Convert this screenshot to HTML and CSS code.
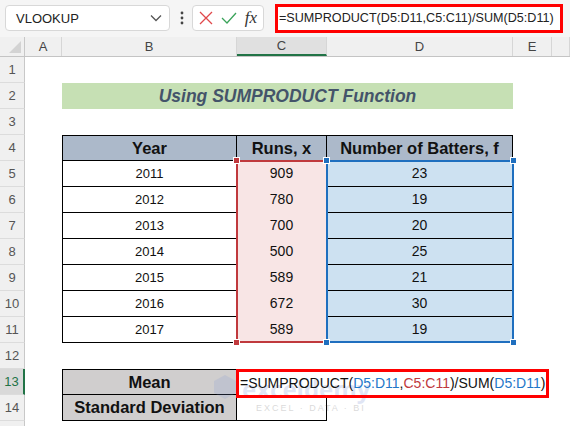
FILE: index.html
```html
<!DOCTYPE html>
<html lang="en">
<head>
  <meta charset="UTF-8">
  <title>SUMPRODUCT mean</title>
  <link rel="stylesheet" href="styles.css">
</head>
<body>

  <div class="topbar">
    <div class="namebox">
      <span>VLOOKUP</span>
      <svg width="12" height="8" viewBox="0 0 12 8"><path d="M1 1.5 L6 6.5 L11 1.5" fill="none" stroke="#555" stroke-width="1.3"/></svg>
    </div>
    <svg class="dots" width="4" height="14" viewBox="0 0 4 14"><circle cx="2" cy="2" r="1.4" fill="#444"/><circle cx="2" cy="7" r="1.4" fill="#444"/><circle cx="2" cy="12" r="1.4" fill="#444"/></svg>
    <div class="fxbox">
      <svg width="14" height="14" viewBox="0 0 14 14"><path d="M1 1 L13 13 M13 1 L1 13" stroke="#e0484b" stroke-width="1.3"/></svg>
      <svg width="16" height="12" viewBox="0 0 16 12"><path d="M1 6 L6 11 L15 1" fill="none" stroke="#3aa35a" stroke-width="1.3"/></svg>
      <span class="fx">fx</span>
    </div>
    <div class="formula">=SUMPRODUCT(D5:D11,C5:C11)/SUM(D5:D11)</div>
  </div>

  <div class="sheet">
    <div class="row colheads">
      <div class="rh corner"><span class="tri"></span></div>
      <div class="ch ca">A</div>
      <div class="ch cb">B</div>
      <div class="ch cc active">C</div>
      <div class="ch cd">D</div>
      <div class="ch ce">E</div>
      <div class="ch cf"></div>
    </div>

    <div class="row"><div class="rh">1</div></div>
    <div class="row">
      <div class="rh">2</div>
      <div class="ca"></div>
      <div class="title">Using SUMPRODUCT Function</div>
    </div>
    <div class="row"><div class="rh">3</div></div>
    <div class="row">
      <div class="rh">4</div>
      <div class="ca"></div>
      <div class="cell cb head first">Year</div>
      <div class="cell cc head">Runs, x</div>
      <div class="cell cd head">Number of Batters, f</div>
    </div>
    <div class="row">
      <div class="rh">5</div>
      <div class="ca"></div>
      <div class="cell cb year">2011</div>
      <div class="cell cc runs">909</div>
      <div class="cell cd bats">23</div>
    </div>
    <div class="row">
      <div class="rh">6</div>
      <div class="ca"></div>
      <div class="cell cb year">2012</div>
      <div class="cell cc runs">780</div>
      <div class="cell cd bats">19</div>
    </div>
    <div class="row">
      <div class="rh">7</div>
      <div class="ca"></div>
      <div class="cell cb year">2013</div>
      <div class="cell cc runs">700</div>
      <div class="cell cd bats">20</div>
    </div>
    <div class="row">
      <div class="rh">8</div>
      <div class="ca"></div>
      <div class="cell cb year">2014</div>
      <div class="cell cc runs">500</div>
      <div class="cell cd bats">25</div>
    </div>
    <div class="row">
      <div class="rh">9</div>
      <div class="ca"></div>
      <div class="cell cb year">2015</div>
      <div class="cell cc runs">589</div>
      <div class="cell cd bats">21</div>
    </div>
    <div class="row">
      <div class="rh">10</div>
      <div class="ca"></div>
      <div class="cell cb year">2016</div>
      <div class="cell cc runs">672</div>
      <div class="cell cd bats">30</div>
    </div>
    <div class="row">
      <div class="rh">11</div>
      <div class="ca"></div>
      <div class="cell cb year">2017</div>
      <div class="cell cc runs">589</div>
      <div class="cell cd bats">19</div>
    </div>
    <div class="row"><div class="rh">12</div></div>
    <div class="row">
      <div class="rh current">13</div>
      <div class="ca"></div>
      <div class="cell cb label first">Mean</div>
      <div class="cell cc activecell"></div>
    </div>
    <div class="row">
      <div class="rh">14</div>
      <div class="ca"></div>
      <div class="cell cb label">Standard Deviation</div>
      <div class="cell cc plain"></div>
    </div>
    <div class="row"><div class="rh"></div></div>

    <!-- range highlights while editing the formula -->
    <div class="sel sel-red">
      <span class="handle tl"></span><span class="handle bl"></span>
    </div>
    <div class="sel sel-blue">
      <span class="handle tl"></span><span class="handle tr"></span>
      <span class="handle bl"></span><span class="handle br"></span>
    </div>

    <div class="watermark">
      <svg width="26" height="26" viewBox="0 0 26 26"><path d="M13 1 L24 7 L24 19 L13 25 L2 19 L2 7 Z" fill="#7d93d6"/></svg>
      <span class="wm-name">exceldemy</span>
      <span class="wm-sub">EXCEL · DATA · BI</span>
    </div>

    <div class="editor">=SUMPRODUCT(<span class="ref-d">D5:D11</span>,<span class="ref-c">C5:C11</span>)/SUM(<span class="ref-d">D5:D11</span>)</div>
  </div>

</body>
</html>
```

FILE: styles.css
```css
* {
  box-sizing: border-box;
}

body {
  margin: 0;
  font-family: 'Liberation Sans', Arial, sans-serif;
  background-color: #fff;
  overflow: hidden;
  height: 426px;
}

/* formula bar */
.topbar {
  height: 37px;
  background-color: #f5f5f5;
  display: flex;
  align-items: flex-start;
  padding: 5px 0 0 5px;
}

.namebox {
  width: 165px;
  height: 26px;
  background-color: #fff;
  border: 1px solid #d8d8d8;
  border-radius: 4px;
  display: flex;
  align-items: center;
  justify-content: space-between;
  padding: 0 7px 0 10px;
  font-size: 13px;
  color: #222;
}

.dots {
  margin: 6px 8px 0 10px;
}

.fxbox {
  width: 72px;
  height: 26px;
  background-color: #fff;
  border: 1px solid #d8d8d8;
  border-radius: 4px;
  display: flex;
  align-items: center;
  justify-content: space-between;
  padding: 0 6px 0 6px;
}

.fx {
  font-family: 'Liberation Serif', serif;
  font-style: italic;
  font-size: 17px;
  color: #333;
}

.formula {
  margin: -1px 0 0 11px;
  width: 288px;
  height: 29px;
  background-color: #fff;
  border: 3px solid #ff0000;
  font-size: 12.6px;
  line-height: 22px;
  padding-left: 1px;
  color: #222;
  white-space: nowrap;
  overflow: hidden;
}

/* grid */
.sheet {
  position: relative;
}

.row {
  display: flex;
  height: 26px;
}

.colheads {
  height: 20px;
  background-color: #f0f0f0;
  border-bottom: 1px solid #c4c4c4;
}

.rh {
  width: 25px;
  flex: none;
  background-color: #f0f0f0;
  border-right: 1px solid #c8c8c8;
  border-bottom: 1px solid #dcdcdc;
  font-size: 13px;
  color: #555;
  text-align: center;
  line-height: 26px;
}

.rh.current {
  background-color: #d9d9d9;
  color: #217346;
  border-right: 2px solid #217346;
}

.corner {
  position: relative;
  border-bottom: none;
}

.tri {
  position: absolute;
  right: 3px;
  bottom: 3px;
  width: 0;
  height: 0;
  border-left: 12px solid transparent;
  border-bottom: 12px solid #d3d3d3;
}

.ch {
  flex: none;
  font-size: 13px;
  color: #444;
  text-align: center;
  line-height: 19px;
  border-right: 1px solid #d6d6d6;
}

.ch.active {
  background-color: #e0e0e0;
  border-bottom: 2px solid #217346;
  line-height: 18px;
}

.ca { width: 37px; flex: none; }
.cb { width: 175px; flex: none; }
.cc { width: 90px; flex: none; }
.cd { width: 186px; flex: none; }
.ce { width: 39px; flex: none; }
.cf { flex: 1; }

.title {
  width: 451px;
  background-color: #c6e0b4;
  color: #44546a;
  font-weight: bold;
  font-style: italic;
  font-size: 17.5px;
  text-align: center;
  line-height: 27px;
}

/* table */
.cell {
  border-right: 1px solid #000;
  border-bottom: 1px solid #000;
  text-align: center;
  line-height: 25px;
  color: #111;
}

.cb.cell {
  border-left: 1px solid #000;
}

.head {
  background-color: #acb9ca;
  border-top: 1px solid #000;
  font-weight: bold;
  font-size: 16.5px;
  line-height: 24px;
}

.year {
  font-size: 13px;
}

.runs {
  background-color: #f8e5e5;
  border-bottom-color: transparent;
  font-size: 14px;
}

.bats {
  background-color: #cde1f1;
  font-size: 14px;
}

.label {
  background-color: #d0cece;
  font-weight: bold;
  font-size: 16.5px;
  line-height: 25px;
}

.label.first {
  border-top: 1px solid #000;
  line-height: 24px;
}

.activecell {
  border-top: 2px solid #217346;
  border-right: none;
  border-bottom: none;
}

.plain {
  background-color: #fff;
}

/* overlays */
.sel {
  position: absolute;
  top: 123px;
  height: 183px;
  border: 2px solid;
}

.sel-red {
  left: 236px;
  width: 92px;
  border-color: #c0393d;
}

.sel-blue {
  left: 326px;
  width: 188px;
  border-color: #1f6fbf;
}

.handle {
  position: absolute;
  width: 7px;
  height: 7px;
  border: 1px solid #fff;
}

.sel-red .handle { background-color: #c0393d; }
.sel-blue .handle { background-color: #1f6fbf; }

.handle.tl { left: -5px; top: -5px; }
.handle.tr { right: -5px; top: -5px; }
.handle.bl { left: -5px; bottom: -5px; }
.handle.br { right: -5px; bottom: -5px; }

.watermark {
  position: absolute;
  left: 212px;
  top: 333px;
  width: 140px;
  height: 46px;
  opacity: 0.18;
}

.watermark svg {
  position: absolute;
  left: 0;
  top: 4px;
}

.wm-name {
  position: absolute;
  left: 30px;
  top: 2px;
  font-family: 'Open Sans', sans-serif;
  font-weight: bold;
  font-size: 24px;
  color: #5b72c8;
}

.wm-sub {
  position: absolute;
  left: 44px;
  top: 33px;
  font-size: 9px;
  letter-spacing: 2px;
  color: #333;
  white-space: nowrap;
}

.editor {
  position: absolute;
  left: 236px;
  top: 332px;
  width: 313px;
  height: 29px;
  border: 3px solid #ff0000;
  font-size: 14px;
  line-height: 22px;
  padding-left: 1px;
  color: #111;
  white-space: nowrap;
  overflow: hidden;
}

.ref-d { color: #1f77c9; }
.ref-c { color: #c0393d; }
```
